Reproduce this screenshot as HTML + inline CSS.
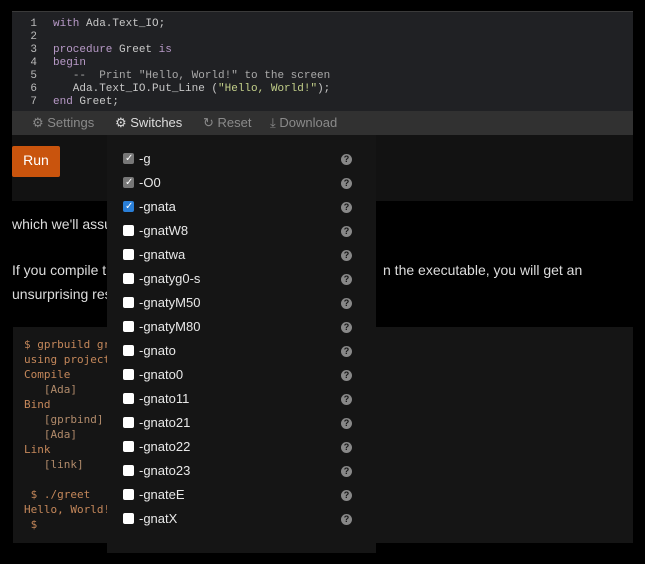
<!DOCTYPE html>
<html><head><style>
*{margin:0;padding:0;box-sizing:border-box}
body{width:645px;height:564px;background:#000;position:relative;overflow:hidden;font-family:"Liberation Sans",sans-serif}
.abs{position:absolute}
.mono{font-family:"Liberation Mono",monospace}
#ed{left:12px;top:11px;width:621px;height:100px;background:#202124;border-top:1px solid #3a3a3a}
#ed .ln{position:absolute;left:0;top:6px;width:25px;text-align:right;color:#bbb;font-size:11px;line-height:13px}
#ed .code{position:absolute;left:41px;top:6px;color:#c8c8c8;font-size:11px;line-height:13px;white-space:pre}
.kw{color:#b89ac8}.str{color:#c3d08a}.cm{color:#aaa}
#tb{left:12px;top:111px;width:621px;height:24px;background:#313131;color:#8a8a8a;font-size:13px;line-height:24px}
#tb span{position:absolute;white-space:nowrap}
#pn{left:12px;top:135px;width:621px;height:66px;background:#121212}
#run{left:12px;top:146px;width:48px;height:31px;background:#c9540d;color:#fff;font-size:14px;text-align:center;line-height:29px;border-radius:2px}
p{position:absolute;left:12px;color:#ddd;font-size:14px;white-space:nowrap}
#cb{left:13px;top:327px;width:620px;height:216px;background:#151515}
#cb pre{position:absolute;left:11px;top:10px;color:#c4875a;font-size:11px;line-height:15px}
.br{color:#b08a6a}
#dd{left:107px;top:135px;width:269px;height:418px;background:#151515}
.it{position:absolute;left:16px;width:240px;height:20px;color:#e8e8e8;font-size:13px;line-height:20px}
.bx{position:absolute;left:0;top:4px;width:11px;height:11px;background:#fff;border-radius:2px}
.bx.g{background:#777}.bx.b{background:#2a7fd8}
.bx i{position:absolute;left:2px;top:-1px;color:#fff;font-size:10px;font-style:normal;line-height:13px}
.lb{position:absolute;left:16px;top:0;white-space:nowrap}
.q{position:absolute;left:218px;top:5px;width:11px;height:11px;border-radius:50%;background:#888;color:#151515;font-size:9px;font-weight:bold;text-align:center;line-height:11px}
</style></head><body>
<div id="ed" class="abs mono">
<div class="ln">1<br>2<br>3<br>4<br>5<br>6<br>7</div>
<div class="code"><span class="kw">with</span> Ada.Text_IO;

<span class="kw">procedure</span> Greet <span class="kw">is</span>
<span class="kw">begin</span>
   <span class="cm">--  Print "Hello, World!" to the screen</span>
   Ada.Text_IO.Put_Line (<span class="str">"Hello, World!"</span>);
<span class="kw">end</span> Greet;</div>
</div>
<div id="tb" class="abs">
<span style="left:20px">⚙ Settings</span>
<span style="left:103px;color:#ddd">⚙ Switches</span>
<span style="left:191px">↻ Reset</span>
<span style="left:258px">⤓ Download</span>
</div>
<div id="pn" class="abs"></div>
<div id="run" class="abs">Run</div>
<p style="top:216px">which we'll assume is in greet.adb.</p>
<p style="top:262px">If you compile this program and run it</p>
<p style="top:262px;left:383px">n the executable, you will get an</p>
<p style="top:286px">unsurprising result.</p>
<div id="cb" class="abs mono"><pre>$ gprbuild greet.adb
using project file default.gpr
Compile
   <span class="br">[Ada]</span>          greet.adb
Bind
   <span class="br">[gprbind]</span>      greet.bexch
   <span class="br">[Ada]</span>          greet.ali
Link
   <span class="br">[link]</span>         greet.adb

 $ ./greet
Hello, World!
 $</pre></div>
<div id="dd" class="abs">
<div class="it" style="top:14px"><div class="bx g"><i>✓</i></div><span class="lb">-g</span><div class="q">?</div></div>
<div class="it" style="top:38px"><div class="bx g"><i>✓</i></div><span class="lb">-O0</span><div class="q">?</div></div>
<div class="it" style="top:62px"><div class="bx b"><i>✓</i></div><span class="lb">-gnata</span><div class="q">?</div></div>
<div class="it" style="top:86px"><div class="bx"></div><span class="lb">-gnatW8</span><div class="q">?</div></div>
<div class="it" style="top:110px"><div class="bx"></div><span class="lb">-gnatwa</span><div class="q">?</div></div>
<div class="it" style="top:134px"><div class="bx"></div><span class="lb">-gnatyg0-s</span><div class="q">?</div></div>
<div class="it" style="top:158px"><div class="bx"></div><span class="lb">-gnatyM50</span><div class="q">?</div></div>
<div class="it" style="top:182px"><div class="bx"></div><span class="lb">-gnatyM80</span><div class="q">?</div></div>
<div class="it" style="top:206px"><div class="bx"></div><span class="lb">-gnato</span><div class="q">?</div></div>
<div class="it" style="top:230px"><div class="bx"></div><span class="lb">-gnato0</span><div class="q">?</div></div>
<div class="it" style="top:254px"><div class="bx"></div><span class="lb">-gnato11</span><div class="q">?</div></div>
<div class="it" style="top:278px"><div class="bx"></div><span class="lb">-gnato21</span><div class="q">?</div></div>
<div class="it" style="top:302px"><div class="bx"></div><span class="lb">-gnato22</span><div class="q">?</div></div>
<div class="it" style="top:326px"><div class="bx"></div><span class="lb">-gnato23</span><div class="q">?</div></div>
<div class="it" style="top:350px"><div class="bx"></div><span class="lb">-gnateE</span><div class="q">?</div></div>
<div class="it" style="top:374px"><div class="bx"></div><span class="lb">-gnatX</span><div class="q">?</div></div>
</div>
</body></html>
